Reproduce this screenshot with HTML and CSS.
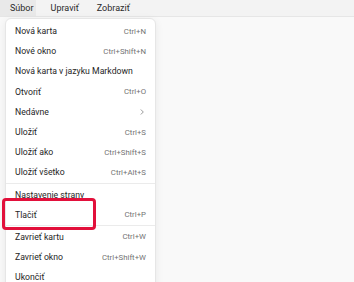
FILE: index.html
```html
<!DOCTYPE html>
<html lang="sk">
<head>
    <meta charset="UTF-8">
    <title>Poznámkový blok</title>
    <link rel="stylesheet" href="styles.css">
</head>
<body>
    <!-- Top menu bar -->
    <div class="menubar">
        <div class="menubar-item active">Súbor</div>
        <div class="menubar-item">Upraviť</div>
        <div class="menubar-item">Zobraziť</div>
    </div>

    <!-- Editor area -->
    <div class="editor"></div>

    <!-- File menu dropdown -->
    <div class="dropdown">
        <div class="item"><span>Nová karta</span><span class="key">Ctrl+N</span></div>
        <div class="item"><span>Nové okno</span><span class="key">Ctrl+Shift+N</span></div>
        <div class="item"><span>Nová karta v jazyku Markdown</span></div>
        <div class="item"><span>Otvoriť</span><span class="key">Ctrl+O</span></div>
        <div class="item"><span>Nedávne</span>
            <svg class="chevron" width="6" height="8" viewBox="0 0 6 8"><path d="M1.8 1.5 L4.3 4 L1.8 6.5" fill="none" stroke="#808080" stroke-width="0.8"/></svg>
        </div>
        <div class="item"><span>Uložiť</span><span class="key">Ctrl+S</span></div>
        <div class="item"><span>Uložiť ako</span><span class="key">Ctrl+Shift+S</span></div>
        <div class="item"><span>Uložiť všetko</span><span class="key">Ctrl+Alt+S</span></div>
        <div class="separator"></div>
        <div class="item"><span>Nastavenie strany</span></div>
        <div class="item"><span>Tlačiť</span><span class="key">Ctrl+P</span></div>
        <div class="separator"></div>
        <div class="item"><span>Zavrieť kartu</span><span class="key">Ctrl+W</span></div>
        <div class="item"><span>Zavrieť okno</span><span class="key">Ctrl+Shift+W</span></div>
        <div class="item"><span>Ukončiť</span></div>
    </div>

    <!-- Red highlight around Print -->
    <div class="highlight"></div>
</body>
</html>
```

FILE: styles.css
```css
/* Page basics */
body {
    margin: 0;
    height: 282px;
    overflow: hidden;
    font-family: 'Roboto', 'Noto Sans', sans-serif;
    color: #262626;
    background: #f9f9f9;
    position: relative;
}

/* Menu bar on top */
.menubar {
    display: flex;
    gap: 6px;
    height: 16px;
    background: #f3f3f3;
    border-bottom: 1px solid #e6e6e6;
    font-size: 9px;
    line-height: 16px;
}

.menubar-item {
    padding: 0 3px 0 9px;
    color: #2a2a2a;
}

.menubar-item.active {
    background: #e9e9e9;
    padding: 0 2px 0 10px;
}

.editor {
    height: 265px;
    background: #f9f9f9;
}

/* Dropdown with file commands */
.dropdown {
    position: absolute;
    top: 18px;
    left: 5px;
    width: 151px;
    height: 280px;
    background: #ffffff;
    border: 1px solid #e6e6e6;
    border-radius: 6px 6px 0 0;
    box-shadow: 0 2px 8px rgba(0, 0, 0, 0.07);
    padding-top: 2px;
    box-sizing: border-box;
}

.item {
    display: flex;
    justify-content: space-between;
    align-items: center;
    height: 20.2px;
    padding: 0 9px 0 9px;
    font-size: 8.7px;
    white-space: nowrap;
}

.key {
    font-size: 7.8px;
    color: #737373;
}

.chevron {
    margin-right: 1px;
}

.separator {
    height: 1px;
    background: #ebebeb;
    margin-bottom: 1px;
}

/* Red annotation box */
.highlight {
    position: absolute;
    left: 2px;
    top: 198px;
    width: 88px;
    height: 26px;
    border: 3px solid #e2103b;
    border-radius: 4px;
}
```
